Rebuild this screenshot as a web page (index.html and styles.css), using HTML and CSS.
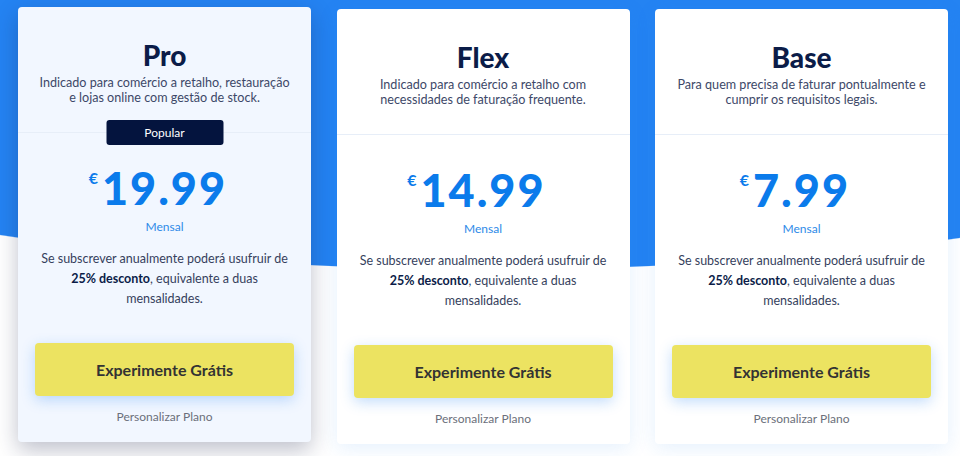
FILE: index.html
```html
<!DOCTYPE html>
<html lang="pt">
<head>
<meta charset="utf-8">
<title>Planos</title>
<link rel="stylesheet" href="styles.css">
</head>
<body>
<main class="plans">
  <section class="card featured">
    <header class="card-head">
      <h2 class="title">Pro</h2>
      <p class="lead">Indicado para comércio a retalho, restauração<br>e lojas online com gestão de stock.</p>
      <span class="badge">Popular</span>
    </header>
    <div class="card-body">
      <div class="price"><span class="cur">€</span>19.99</div>
      <span class="period">Mensal</span>
      <p class="note">Se subscrever anualmente poderá usufruir de<br><strong>25% desconto</strong>, equivalente a duas<br>mensalidades.</p>
      <a class="cta" href="#">Experimente Grátis</a>
      <a class="custom" href="#">Personalizar Plano</a>
    </div>
  </section>
  <section class="card">
    <header class="card-head">
      <h2 class="title">Flex</h2>
      <p class="lead">Indicado para comércio a retalho com<br>necessidades de faturação frequente.</p>
    </header>
    <div class="card-body">
      <div class="price"><span class="cur">€</span>14.99</div>
      <span class="period">Mensal</span>
      <p class="note">Se subscrever anualmente poderá usufruir de<br><strong>25% desconto</strong>, equivalente a duas<br>mensalidades.</p>
      <a class="cta" href="#">Experimente Grátis</a>
      <a class="custom" href="#">Personalizar Plano</a>
    </div>
  </section>
  <section class="card">
    <header class="card-head">
      <h2 class="title">Base</h2>
      <p class="lead">Para quem precisa de faturar pontualmente e<br>cumprir os requisitos legais.</p>
    </header>
    <div class="card-body">
      <div class="price"><span class="cur">€</span>7.99</div>
      <span class="period">Mensal</span>
      <p class="note">Se subscrever anualmente poderá usufruir de<br><strong>25% desconto</strong>, equivalente a duas<br>mensalidades.</p>
      <a class="cta" href="#">Experimente Grátis</a>
      <a class="custom" href="#">Personalizar Plano</a>
    </div>
  </section>
</main>
</body>
</html>
```

FILE: styles.css
```css
html, body {
  height: 100%;
}
body {
  margin: 0;
  font-family: Lato, "Noto Sans", sans-serif;
  background:
    radial-gradient(1003px 270px at 490px 0, #2483f2 99.6%, rgba(255,255,255,0) 100%),
    #ffffff;
  background-repeat: no-repeat;
  overflow: hidden;
}
.plans {
  display: flex;
  align-items: flex-start;
  gap: 25.5px;
  padding: 9px 0 0 18px;
}
.card {
  width: 293px;
  flex: none;
  background: #ffffff;
  border-radius: 4px;
  box-shadow: 0 4px 20px rgba(36, 131, 242, 0.12);
  display: flex;
  flex-direction: column;
}
.card.featured {
  background: #f2f7ff;
  transform: translateY(-2px);
  box-shadow: 0 8px 22px rgba(20, 30, 70, 0.28);
}
.card-head {
  position: relative;
  padding: 31px 10px 27px;
  border-bottom: 1px solid #e7eef8;
  text-align: center;
}
.title {
  margin: 0;
  font-size: 28px;
  line-height: 34px;
  font-weight: 900;
  color: #0b1c48;
}
.lead {
  margin: 3px 0 0;
  font-size: 12.6px;
  line-height: 15px;
  color: #3d4868;
  white-space: nowrap;
}
.badge {
  position: absolute;
  left: 50%;
  bottom: -13px;
  transform: translateX(-50%);
  width: 117px;
  height: 25px;
  line-height: 25px;
  border-radius: 3px;
  background: #04143e;
  color: #ffffff;
  font-size: 12px;
}
.card-body {
  display: flex;
  flex-direction: column;
  align-items: center;
  padding: 30px 17px 17px;
  text-align: center;
}
.price {
  position: relative;
  font-size: 45px;
  line-height: 50px;
  font-weight: 900;
  color: #0b7beb;
  letter-spacing: 2px;
}
.cur {
  position: absolute;
  right: 100%;
  top: 7px;
  margin-right: 4px;
  font-size: 16px;
  line-height: 16px;
  font-weight: 700;
  letter-spacing: 0;
}
.period {
  margin-top: 6px;
  font-size: 12px;
  line-height: 16px;
  color: #2e8ae8;
}
.note {
  margin: 14px 0 0;
  font-size: 12.5px;
  line-height: 20px;
  color: #363f5d;
  white-space: nowrap;
}
.note strong {
  color: #0b1c48;
  font-weight: 700;
}
.cta {
  margin-top: 34px;
  width: 100%;
  height: 53px;
  line-height: 53px;
  border-radius: 4px;
  background: #ece361;
  color: #333333;
  font-size: 16px;
  font-weight: 700;
  text-decoration: none;
  box-shadow: 0 4px 14px rgba(36, 131, 242, 0.28);
}
.custom {
  margin-top: 13px;
  font-size: 12px;
  line-height: 16px;
  color: #6b6f7b;
  text-decoration: none;
}
```
